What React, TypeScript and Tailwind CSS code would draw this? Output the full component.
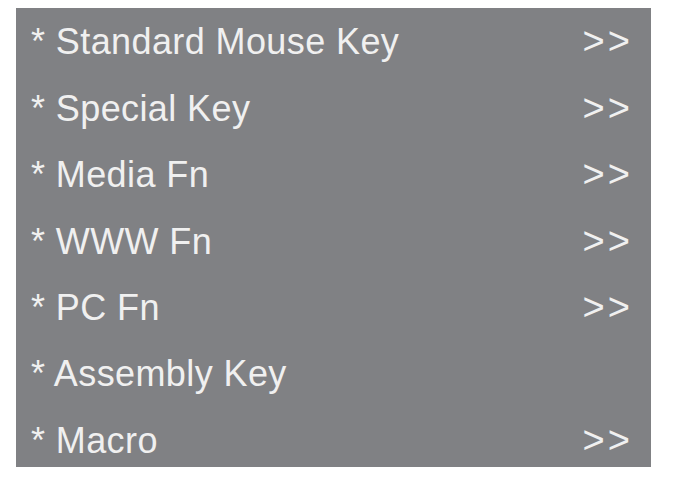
import React from "react";

const rows: { label: string; arrow: boolean }[] = [
  { label: "Standard Mouse Key", arrow: true },
  { label: "Special Key", arrow: true },
  { label: "Media Fn", arrow: true },
  { label: "WWW Fn", arrow: true },
  { label: "PC Fn", arrow: true },
  { label: "Assembly Key", arrow: false },
  { label: "Macro", arrow: true },
];

export default function App() {
  return (
    <div className="w-[674px] h-[497px] bg-white pt-[8px] pl-[16px]" style={{ fontFamily: '"Liberation Sans", Arial, sans-serif' }}>
      <div className="w-[635px] h-[459px] bg-[#808184] overflow-hidden flex flex-col pl-[15px] pr-[18px] text-[#f0f0f0]">
        {rows.map((r) => (
          <div key={r.label} className="h-[66.5px] shrink-0 flex items-baseline justify-between leading-[66.5px]">
            <span className="text-[36px] tracking-[0.4px] whitespace-nowrap">* {r.label}</span>
            {r.arrow && <span className="text-[38px] tracking-[3px]">&gt;&gt;</span>}
          </div>
        ))}
      </div>
    </div>
  );
}
